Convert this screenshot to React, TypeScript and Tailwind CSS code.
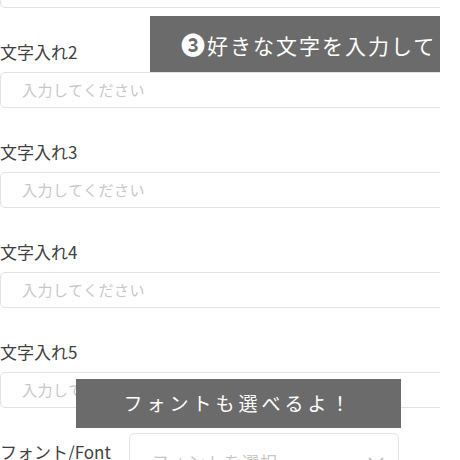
import React from 'react';

const FIELDS = ['文字入れ2', '文字入れ3', '文字入れ4', '文字入れ5'];

function TextBox() {
  return (
    <div className="h-[36px] w-[460px] rounded-[5px] border border-[#e2e2e2] bg-white pl-[21px] flex items-center">
      <span className="text-[15px] text-[#c8c8c8] tracking-[0.5px]">入力してください</span>
    </div>
  );
}

export default function App() {
  return (
    <div
      className="relative w-[460px] h-[460px] overflow-hidden bg-white"
      style={{ fontFamily: '"Noto Sans CJK JP", "Noto Sans", sans-serif' }}
    >
      <div className="w-[440px] overflow-hidden -mt-[28px]">
        {/* previous field, only its bottom edge shows */}
        <TextBox />

        {FIELDS.map((label) => (
          <div key={label} className="mt-[30px]">
            <div className="h-[28px] leading-[28px] text-[17px] text-[#404040]">{label}</div>
            <div className="mt-[6px]">
              <TextBox />
            </div>
          </div>
        ))}

        <div className="mt-[25px] flex items-start">
          <div className="w-[129px] pt-[5px] text-[17px] leading-[28px] text-[#404040]">フォント/Font</div>
          <div className="w-[270px] h-[44px] rounded-[6px] border border-[#e4e4e4] flex items-center justify-between pl-[22px] pr-[14px] pt-[14px]">
            <span className="text-[17px] text-[#c8c8c8] tracking-[1px]">フォントを選択</span>
            <svg width="16" height="10" viewBox="0 0 16 10" fill="none" stroke="#b5b5b5" strokeWidth="1.6">
              <path d="M1 1l7 7 7-7" />
            </svg>
          </div>
        </div>
      </div>

      {/* caption overlays */}
      <div className="absolute left-[150px] top-[16px] w-[290px] h-[56px] bg-[#6b6b6b] flex items-center pl-[31px] overflow-hidden">
        <span className="whitespace-nowrap text-[21px] tracking-[2px] text-white">
          <span className="text-[24px] font-bold">❸</span>好きな文字を入力して
        </span>
      </div>
      <div className="absolute left-[76px] top-[379px] w-[325px] h-[49px] bg-[#6b6b6b] flex items-center justify-center">
        <span className="whitespace-nowrap text-[19px] tracking-[4px] text-white">フォントも選べるよ！</span>
      </div>
    </div>
  );
}
